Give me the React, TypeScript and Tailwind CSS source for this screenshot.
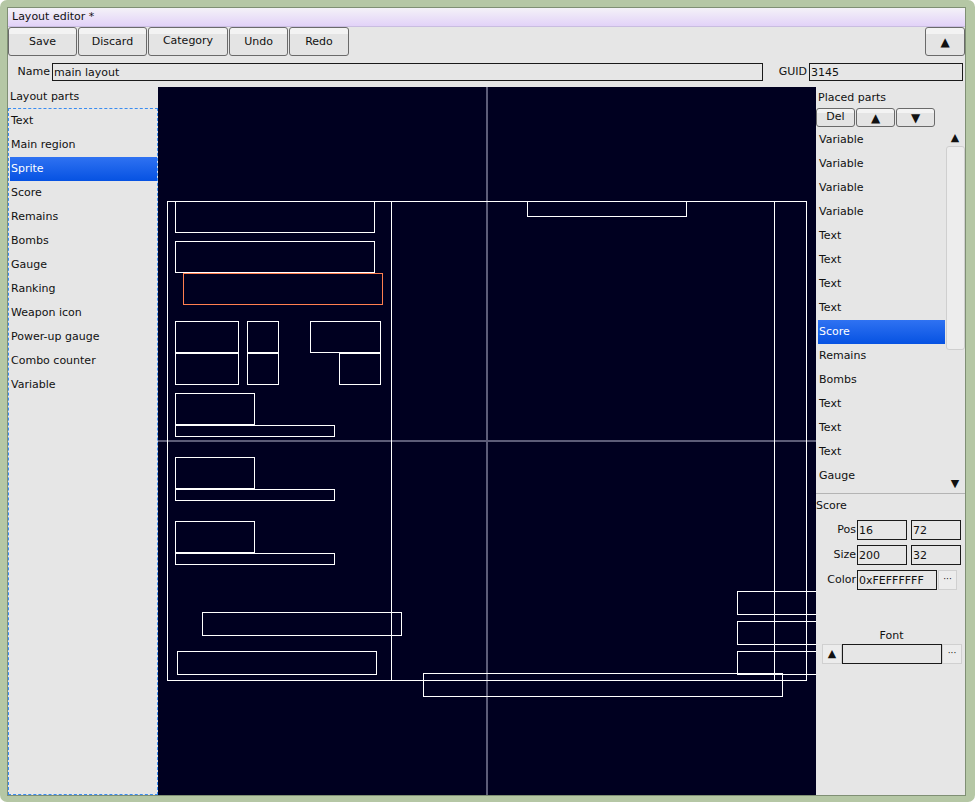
import React from 'react';

const layoutParts = [
  'Text',
  'Main region',
  'Sprite',
  'Score',
  'Remains',
  'Bombs',
  'Gauge',
  'Ranking',
  'Weapon icon',
  'Power-up gauge',
  'Combo counter',
  'Variable',
];

const placedParts = [
  'Variable',
  'Variable',
  'Variable',
  'Variable',
  'Text',
  'Text',
  'Text',
  'Text',
  'Score',
  'Remains',
  'Bombs',
  'Text',
  'Text',
  'Text',
  'Gauge',
];

// canvas-local rects: x, y, w, h
const rects: [number, number, number, number][] = [
  [9, 114, 639, 479],
  [233, 114, 383, 479],
  [17, 114, 199, 31],
  [17, 154, 199, 31],
  [17, 234, 63, 31],
  [17, 266, 63, 31],
  [89, 234, 31, 31],
  [89, 266, 31, 31],
  [152, 234, 70, 31],
  [181, 266, 41, 31],
  [17, 306, 79, 31],
  [17, 338, 159, 11],
  [17, 370, 79, 31],
  [17, 402, 159, 11],
  [17, 434, 79, 31],
  [17, 466, 159, 11],
  [44, 525, 199, 23],
  [19, 564, 199, 23],
  [369, 114, 159, 15],
  [265, 586, 359, 23],
  [579, 504, 100, 23],
  [579, 534, 100, 23],
  [579, 564, 100, 23],
];

function Btn({ label, className }: { label: string; className: string }) {
  return (
    <div
      className={`flex items-center justify-center rounded-[3px] border border-[#6a6a6a] bg-[linear-gradient(to_bottom,#f3f3f3_0%,#f3f3f3_22%,#e4e4e4_22%,#e4e4e4_100%)] text-[#111] ${className}`}
    >
      {label}
    </div>
  );
}

function Field({ value, className }: { value: string; className: string }) {
  return (
    <div className={`flex items-center border border-[#1a1a1a] bg-[#e6e6e6] pl-[1px] leading-none ${className}`}>
      {value}
    </div>
  );
}

function EditorCanvas() {
  return (
    <div className="w-[658px] h-full bg-[#000020] overflow-hidden">
      <svg width="658" height="708" viewBox="0 0 658 708">
        <rect x="328" y="0" width="2" height="708" fill="#5c5c78" />
        <rect x="0" y="353" width="658" height="2" fill="#5c5c78" />
        {rects.map(([x, y, w, h], i) => (
          <rect key={i} x={x + 0.5} y={y + 0.5} width={w} height={h} fill="none" stroke="#ffffff" strokeWidth="1" />
        ))}
        <rect x="25.5" y="186.5" width="199" height="31" fill="none" stroke="#ff7f50" strokeWidth="1" />
      </svg>
    </div>
  );
}

export default function App() {
  return (
    <div className="w-[975px] h-[802px] bg-white font-['DejaVu_Sans',sans-serif] text-[11px] text-[#111]">
      <div className="w-[975px] h-[802px] rounded-[7px] bg-[#b5c7a5] pl-[7px] pr-[9px] pt-[7px] pb-[6px]">
        <div className="h-full flex flex-col border border-[#7f8f74] bg-[#e6e6e6]">
          {/* title */}
          <div className="h-[19px] flex items-center pl-[4px] bg-[linear-gradient(to_bottom,#f4f2f8,#e2d2f8)] border-b border-[#c9bde0]">
            Layout editor *
          </div>

          {/* toolbar */}
          <div className="h-[30px] flex items-start gap-[1px]">
            <Btn label="Save" className="w-[69px] h-[29px] pt-[2px]" />
            <Btn label="Discard" className="w-[69px] h-[29px] pt-[2px]" />
            <Btn label="Category" className="w-[80px] h-[29px]" />
            <Btn label="Undo" className="w-[59px] h-[29px] pt-[2px]" />
            <Btn label="Redo" className="w-[60px] h-[29px] pt-[2px]" />
            <Btn label="▲" className="w-[40px] h-[29px] ml-auto text-[12px]" />
          </div>

          {/* name row */}
          <div className="h-[30px] flex items-center">
            <div className="w-[44px] text-right pr-[2px]">Name</div>
            <Field value="main layout" className="w-[711px] h-[18px]" />
            <div className="w-[46px] text-right pr-[2px]">GUID</div>
            <Field value="3145" className="w-[154px] h-[18px]" />
          </div>

          {/* main */}
          <div className="flex-1 flex min-h-0">
            <div className="w-[150px] flex flex-col">
              <div className="h-[21px] flex items-center pl-[2px]">Layout parts</div>
              <div className="flex-1 border border-dashed border-[#3a8cf0]">
                {layoutParts.map((p) =>
                  p === 'Sprite' ? (
                    <div
                      key={p}
                      className="h-[24px] ml-[1px] pl-[1px] flex items-center text-white bg-[linear-gradient(to_bottom,#2f72f2,#0652e2)]"
                    >
                      {p}
                    </div>
                  ) : (
                    <div key={p} className="h-[24px] ml-[1px] pl-[1px] flex items-center">
                      {p}
                    </div>
                  )
                )}
              </div>
            </div>

            <EditorCanvas />

            <div className="w-[149px] flex flex-col">
              <div className="h-[21px] flex items-center pl-[2px] pt-[1px]">Placed parts</div>
              <div className="h-[20px] flex items-start gap-[1px]">
                <Btn label="Del" className="w-[39px] h-[19px]" />
                <Btn label="▲" className="w-[39px] h-[19px] text-[12px]" />
                <Btn label="▼" className="w-[39px] h-[19px] text-[12px]" />
              </div>
              <div className="h-[366px] flex border-b border-[#b4b4b4]">
                <div className="w-[129px] pl-[2px]">
                  {placedParts.map((p, i) =>
                    i === 8 ? (
                      <div
                        key={i}
                        className="h-[24px] pl-[1px] flex items-center text-white bg-[linear-gradient(to_bottom,#2f72f2,#0652e2)]"
                      >
                        {p}
                      </div>
                    ) : (
                      <div key={i} className="h-[24px] pl-[1px] flex items-center">
                        {p}
                      </div>
                    )
                  )}
                </div>
                <div className="w-[20px] flex flex-col items-center">
                  <div className="h-[18px] flex items-center text-[11px] leading-none">▲</div>
                  <div className="w-[19px] h-[204px] ml-[1px] rounded-[3px] border border-[#cfcfcf] bg-[#ededed]" />
                  <div className="h-[18px] mt-auto mb-[1px] flex items-center text-[11px] leading-none">▼</div>
                </div>
              </div>

              <div className="h-[23px] flex items-center pt-[1px]">Score</div>
              <div className="mt-[3px] flex flex-col gap-[5px]">
                <div className="flex items-center">
                  <div className="w-[41px] text-right pr-[1px]">Pos</div>
                  <Field value="16" className="w-[50px] h-[20px]" />
                  <Field value="72" className="w-[50px] h-[20px] ml-[4px]" />
                </div>
                <div className="flex items-center">
                  <div className="w-[41px] text-right pr-[1px]">Size</div>
                  <Field value="200" className="w-[50px] h-[20px]" />
                  <Field value="32" className="w-[50px] h-[20px] ml-[4px]" />
                </div>
                <div className="flex items-center">
                  <div className="w-[41px] text-right pr-[1px]">Color</div>
                  <Field value="0xFEFFFFFF" className="w-[80px] h-[20px]" />
                  <div className="w-[19px] h-[20px] ml-[1px] flex items-center justify-center border border-[#d0d0d0] bg-[#ececec] text-[9px]">
                    ···
                  </div>
                </div>
              </div>

              <div className="mt-[38px] flex justify-center pl-[2px] h-[16px] items-center">Font</div>
              <div className="ml-[6px] flex items-center h-[20px]">
                <div className="w-[20px] h-[20px] flex items-center justify-center border border-[#d0d0d0] bg-[#ececec] text-[11px]">
                  ▲
                </div>
                <Field value="" className="w-[100px] h-[20px]" />
                <div className="w-[20px] h-[20px] flex items-center justify-center border border-[#d0d0d0] bg-[#ececec] text-[9px]">
                  ···
                </div>
              </div>
            </div>
          </div>
        </div>
      </div>
    </div>
  );
}
